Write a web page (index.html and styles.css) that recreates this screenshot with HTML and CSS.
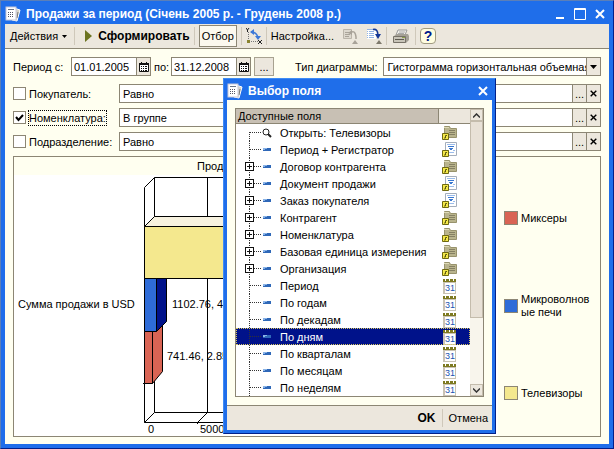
FILE: index.html
```
<!DOCTYPE html>
<html lang="ru">
<head>
  <meta charset="UTF-8" />
  <meta name="viewport" content="width=device-width, initial-scale=1.0"/>
  <title>Продажи за период</title>
  <link rel="stylesheet" href="styles.css">
</head>
<body>
  <!-- Shared icons -->
  <svg class="sprite" aria-hidden="true">
    <symbol id="report" viewBox="0 0 16 16">
      <path d="M9 2l6 2-3 11-5-1z" fill="#d8d4c8" stroke="#fff"/>
      <path d="M13 6l-1 6" stroke="#777"/>
      <rect x="1" y="1" width="10" height="13" fill="#fff" stroke="#c8c8d8"/>
      <path d="M3 3.500h6" stroke="#6a7488"/>
      <path d="M3 6.500h1m1 0h1m1 0h1M3 8.500h1m1 0h1m1 0h1M3 10.500h1m1 0h1m1 0h1" stroke="#556"/>
    </symbol>
    <symbol id="close" viewBox="0 0 10 10">
      <path d="M1 1l8 8M9 1l-8 8" stroke="currentColor" stroke-width="2"/>
    </symbol>
    <symbol id="calendar" viewBox="0 0 10 10">
      <path d="M.5 1.500h9v8h-9z" fill="#fff" stroke="#111"/>
      <path d="M0 1h10v2H0zM2 0h1v1H2zm5 0h1v1H7z" fill="#111"/>
      <path d="M2 4h1v1H2zm2 0h1v1H4zm2 0h2v1H6zM2 6h1v1H2zm2 0h1v1H4zm2 0h2v1H6zM2 8h1v1H2zm2 0h1v1H4zm2 0h2v1H6z" fill="#111"/>
    </symbol>
    <symbol id="arrow" viewBox="0 0 7 4"><path d="M0 0h7L3.500 4z" fill="currentColor"/></symbol>
    <symbol id="branch-first" viewBox="0 0 18 17">
      <path d="M5.500 8v9M6 8.500h11" fill="none" stroke="#333" stroke-dasharray="1 1"/>
    </symbol>
    <symbol id="branch" viewBox="0 0 18 17">
      <path d="M5.500 0v17M6 8.500h11" fill="none" stroke="#333" stroke-dasharray="1 1"/>
    </symbol>
    <symbol id="branch-plus" viewBox="0 0 18 17">
      <path d="M5.500 0v17M10 8.500h7" fill="none" stroke="#333" stroke-dasharray="1 1"/>
      <rect x="1.500" y="4.500" width="8" height="8" fill="#fff" stroke="#111"/>
      <path d="M3 8.500h5M5.500 6v5" stroke="#111"/>
    </symbol>
    <symbol id="item" viewBox="0 0 10 10">
      <path d="M1 3h8v3H1z" fill="#2f68b8"/>
      <path d="M1 3h4v1H3v1H1z" fill="#8ab4e8"/>
    </symbol>
    <symbol id="lens" viewBox="0 0 10 10">
      <circle cx="4" cy="4" r="3" fill="#fff" stroke="#222"/>
      <path d="M6 6l3 3" stroke="#222" stroke-width="2"/>
    </symbol>
    <symbol id="link" viewBox="0 0 7 7">
      <path d="M.5.5h6v6h-6z" fill="#f4e94a" stroke="#6f6910"/>
      <path d="M2 5h1.500V2.500H5" fill="none" stroke="#5d5810"/>
    </symbol>
    <symbol id="folder" viewBox="0 0 16 16">
      <path d="M2.500 1.500h5l1 2h6v9h-12z" fill="#b9b48d" stroke="#98936d"/>
      <path d="M7 5.500h6M7 7.500h6M7 9.500h6" stroke="#858063"/>
      <path d="M2 2.500h5" stroke="#dedab8"/>
      <use href="#link" x="0" y="8" width="7" height="7"/>
    </symbol>
    <symbol id="doc" viewBox="0 0 16 16">
      <path d="M3.500.5h11v13h-11z" fill="#fff" stroke="#a4aebc"/>
      <path d="M5 2.500h8M5 8.500h2m4 0h2M7 10.500h5" stroke="#9abcec"/>
      <path d="M6 4.500h6M7 6.500h4M8 7.500h2" stroke="#3a78d0"/>
      <use href="#link" x="0" y="8" width="7" height="7"/>
    </symbol>
    <symbol id="day" viewBox="0 0 16 16">
      <path d="M1 1h13v15H1z" fill="#c9c3b4"/>
      <path d="M1 1h13v3H1z" fill="#7e7a22"/>
      <path d="M3 1h1v2H3zm4 0h1v2H7zm4 0h1v2h-1z" fill="#fff"/>
      <path d="M3 5h10v10H3z" fill="#fff"/>
      <text x="8" y="13" class="day-text">31</text>
    </symbol>
  </svg>

  <main class="window">
    <header class="titlebar">
      <svg class="icon"><use href="#report"/></svg>
      <h1>Продажи за период (Січень 2005 р. - Грудень 2008 р.)</h1>
      <div class="window-buttons">
        <button aria-label="Свернуть"><svg width="10" height="12" viewBox="0 0 10 12"><path d="M1 10h8" stroke="#fff" stroke-width="2"/></svg></button>
        <button aria-label="Развернуть"><svg width="12" height="12" viewBox="0 0 12 12"><path d="M.5.5h11v11H.5z" fill="none" stroke="#fff"/><path d="M0 1.500h12" stroke="#fff"/></svg></button>
        <button aria-label="Закрыть"><svg width="10" height="10"><use href="#close"/></svg></button>
      </div>
    </header>

    <nav class="toolbar">
      <button class="actions">Действия <svg width="5" height="3"><use href="#arrow"/></svg></button>
      <span class="sep"></span>
      <button class="run"><svg width="7" height="12" viewBox="0 0 7 12"><path d="M0 0l7 6-7 6z" fill="#6c7420"/></svg> Сформировать</button>
      <span class="sep"></span>
      <button class="pressed">Отбор</button>
      <span class="sep"></span>
      <button aria-label="Поменять оси">
        <svg class="icon" viewBox="0 0 16 16">
          <path d="M2.500 4v10M3 13.500h11" stroke="#777" stroke-dasharray="1 1" fill="none"/>
          <path d="M0 0l1.500 2L3 0M1.500 2v2M12 12l4 4M16 12l-4 4" stroke="#222" fill="none"/>
          <path d="M5 4q6 0 7 6" fill="none" stroke="#3b78d8" stroke-width="1.500"/>
          <path d="M4 4l4-3v6zM12 12l-3-4h6z" fill="#3b78d8"/>
          <path d="M1 12h3v3H1z" fill="#8a8430"/>
        </svg>
      </button>
      <span class="sep"></span>
      <button>Настройка...</button>
      <button class="spaced" aria-label="Восстановить настройки" disabled>
        <svg class="icon" viewBox="0 0 16 16">
          <path d="M1.500 1.500h8v9h-8z" fill="#ddd8ce" stroke="#bbb5aa"/>
          <path d="M3 4.500h5M3 6.500h5M3 8.500h4" stroke="#aaa49a"/>
          <path d="M8 5q5-4 6 4v2" fill="none" stroke="#a8a298" stroke-width="1.500"/>
          <path d="M6 5l4-3v5z" fill="#a8a298"/>
          <path d="M10 16l3-4 3 4z" fill="#a8a298"/>
        </svg>
      </button>
      <button class="spaced" aria-label="Сохранить настройки">
        <svg class="icon" viewBox="0 0 16 16">
          <path d="M1 1h9v10H1z" fill="#fff"/>
          <path d="M1 1.500h7M1 3.500h1m1 0h5M1 5.500h1m1 0h5M1 7.500h1m1 0h5M1 9.500h1m1 0h5" stroke="#94b4e4"/>
          <path d="M7 1.500q5-1 5 6" fill="none" stroke="#143898" stroke-width="1.500"/>
          <path d="M9 6h6l-3 5z" fill="#143898"/>
          <path d="M10 16l3-4 3 4z" fill="#7e796c"/>
        </svg>
      </button>
      <span class="sep"></span>
      <button class="print" aria-label="Печать">
        <svg class="icon" viewBox="0 0 16 16">
          <path d="M5 2h9l-2 5H3z" fill="#f4f2ec" stroke="#999"/>
          <path d="M6 4h6M5 5.500h6" stroke="#aaa"/>
          <path d="M1 8l3-2h11l1 2v4l-3 3H1z" fill="#a5a197"/>
          <path d="M.5 8.500h12v6H.5z" fill="#c8c4b8" stroke="#777268"/>
          <path d="M2 11.500h9" stroke="#5e5a50"/>
          <path d="M9 9h3v1H9z" fill="#8aa048"/>
        </svg>
      </button>
      <span class="sep"></span>
      <button class="help" aria-label="Справка">?</button>
    </nav>

    <div class="content">
      <div class="period">
        <label for="from">Период с:</label>
        <div class="field date">
          <input id="from" type="text" value="01.01.2005">
          <button aria-label="Календарь"><svg width="10" height="10"><use href="#calendar"/></svg></button>
        </div>
        <label for="to">по:</label>
        <div class="field date">
          <input id="to" type="text" value="31.12.2008">
          <button aria-label="Календарь"><svg width="10" height="10"><use href="#calendar"/></svg></button>
        </div>
        <button class="more">...</button>
        <label class="type-label" for="type">Тип диаграммы:</label>
        <div class="field combo">
          <select id="type"><option>Гистограмма горизонтальная объемная</option></select>
          <span class="combo-arrow"><svg width="7" height="4"><use href="#arrow"/></svg></span>
        </div>
      </div>

      <div class="filter">
        <span class="check"><input type="checkbox" id="buyer"><svg viewBox="0 0 13 13"><path d="M3 6l2.500 3L10 4" /></svg></span>
        <label for="buyer"><span>Покупатель:</span></label>
        <div class="field">
          <input type="text" value="Равно" aria-label="Условие: покупатель">
          <button>...</button>
          <button aria-label="Очистить"><svg width="7" height="7" viewBox="0 0 10 10"><use href="#close"/></svg></button>
        </div>
      </div>
      <div class="filter">
        <span class="check"><input type="checkbox" id="goods" checked><svg viewBox="0 0 13 13"><path d="M3 6l2.500 3L10 4" /></svg></span>
        <label for="goods"><span class="focused">Номенклатура:</span></label>
        <div class="field">
          <input type="text" value="В группе" aria-label="Условие: номенклатура">
          <button>...</button>
          <button aria-label="Очистить"><svg width="7" height="7" viewBox="0 0 10 10"><use href="#close"/></svg></button>
        </div>
      </div>
      <div class="filter">
        <span class="check"><input type="checkbox" id="unit"><svg viewBox="0 0 13 13"><path d="M3 6l2.500 3L10 4" /></svg></span>
        <label for="unit"><span>Подразделение:</span></label>
        <div class="field">
          <input type="text" value="Равно" aria-label="Условие: подразделение">
          <button>...</button>
          <button aria-label="Очистить"><svg width="7" height="7" viewBox="0 0 10 10"><use href="#close"/></svg></button>
        </div>
      </div>

      <section class="chart">
        <h2>Продажи за период</h2>
        <div class="plot">
          <svg width="480" height="260" viewBox="0 0 480 260">
            <!-- back wall and floor -->
            <g fill="none" stroke="#000">
              <path d="M130.500 12.500V247.500H480M130.500 12.500l10-10H480M140.500 2.500V237.500H480M193.500 2.500V237.500M130.500 247.500l10-10M183.500 247.500l10-10"/>
              <path d="M129 208.500h2M183.500 247v2"/>
            </g>
            <path d="M130.500 51.500l10-10H480v10z" fill="#f7f2df" stroke="#000"/>
            <path d="M130.500 51.500H480v52H130.500z" fill="#f4e88e" stroke="#000"/>
            <path d="M138.500 156.500l10-9v49l-10 12z" fill="#d96454" stroke="#000"/>
            <path d="M130.500 156.500h8v52h-8z" fill="#d96454" stroke="#000"/>
            <path d="M142.500 103.500h10v43l-10 10z" fill="#00128a" stroke="#000"/>
            <path d="M130.500 103.500h12v53h-12z" fill="#2e6cd8" stroke="#000"/>
            <text x="4" y="133">Сумма продажи в USD</text>
            <text x="158" y="133">1102.76, 4.24%</text>
            <text x="153" y="185">741.46, 2.85%</text>
            <text x="134" y="258">0</text>
            <text x="186" y="258">5000</text>
          </svg>
        </div>
        <ul class="legend">
          <li><i class="swatch red"></i><span>Миксеры</span></li>
          <li><i class="swatch blue"></i><span>Микроволновые печи</span></li>
          <li><i class="swatch yellow"></i><span>Телевизоры</span></li>
        </ul>
      </section>
    </div>
  </main>

  <!-- Field picker -->
  <div class="dialog" role="dialog" aria-labelledby="dialogTitle">
    <header class="titlebar">
      <svg class="icon"><use href="#report"/></svg>
      <h2 id="dialogTitle">Выбор поля</h2>
      <div class="window-buttons">
        <button aria-label="Закрыть"><svg width="10" height="10"><use href="#close"/></svg></button>
      </div>
    </header>
    <div class="list">
      <table>
        <thead>
          <tr><th>Доступные поля</th><th class="kind"></th></tr>
        </thead>
        <tbody>
          <tr><td><svg class="tree"><use href="#branch-first"/></svg><svg class="mark"><use href="#lens"/></svg>Открыть: Телевизоры</td><td><svg class="icon"><use href="#folder"/></svg></td></tr>
          <tr><td><svg class="tree"><use href="#branch"/></svg><svg class="mark"><use href="#item"/></svg>Период + Регистратор</td><td><svg class="icon"><use href="#doc"/></svg></td></tr>
          <tr><td><svg class="tree"><use href="#branch-plus"/></svg><svg class="mark"><use href="#item"/></svg>Договор контрагента</td><td><svg class="icon"><use href="#folder"/></svg></td></tr>
          <tr><td><svg class="tree"><use href="#branch-plus"/></svg><svg class="mark"><use href="#item"/></svg>Документ продажи</td><td><svg class="icon"><use href="#doc"/></svg></td></tr>
          <tr><td><svg class="tree"><use href="#branch-plus"/></svg><svg class="mark"><use href="#item"/></svg>Заказ покупателя</td><td><svg class="icon"><use href="#doc"/></svg></td></tr>
          <tr><td><svg class="tree"><use href="#branch-plus"/></svg><svg class="mark"><use href="#item"/></svg>Контрагент</td><td><svg class="icon"><use href="#folder"/></svg></td></tr>
          <tr><td><svg class="tree"><use href="#branch-plus"/></svg><svg class="mark"><use href="#item"/></svg>Номенклатура</td><td><svg class="icon"><use href="#folder"/></svg></td></tr>
          <tr><td><svg class="tree"><use href="#branch-plus"/></svg><svg class="mark"><use href="#item"/></svg>Базовая единица измерения</td><td><svg class="icon"><use href="#folder"/></svg></td></tr>
          <tr><td><svg class="tree"><use href="#branch-plus"/></svg><svg class="mark"><use href="#item"/></svg>Организация</td><td><svg class="icon"><use href="#folder"/></svg></td></tr>
          <tr><td><svg class="tree"><use href="#branch"/></svg><svg class="mark"><use href="#item"/></svg>Период</td><td><svg class="icon"><use href="#day"/></svg></td></tr>
          <tr><td><svg class="tree"><use href="#branch"/></svg><svg class="mark"><use href="#item"/></svg>По годам</td><td><svg class="icon"><use href="#day"/></svg></td></tr>
          <tr><td><svg class="tree"><use href="#branch"/></svg><svg class="mark"><use href="#item"/></svg>По декадам</td><td><svg class="icon"><use href="#day"/></svg></td></tr>
          <tr class="selected"><td><svg class="tree"><use href="#branch"/></svg><svg class="mark"><use href="#item"/></svg>По дням</td><td><svg class="icon"><use href="#day"/></svg></td></tr>
          <tr><td><svg class="tree"><use href="#branch"/></svg><svg class="mark"><use href="#item"/></svg>По кварталам</td><td><svg class="icon"><use href="#day"/></svg></td></tr>
          <tr><td><svg class="tree"><use href="#branch"/></svg><svg class="mark"><use href="#item"/></svg>По месяцам</td><td><svg class="icon"><use href="#day"/></svg></td></tr>
          <tr><td><svg class="tree"><use href="#branch"/></svg><svg class="mark"><use href="#item"/></svg>По неделям</td><td><svg class="icon"><use href="#day"/></svg></td></tr>
        </tbody>
      </table>
      <div class="scrollbar">
        <button aria-label="Вверх"><svg width="7" height="5" viewBox="0 0 7 5"><path d="M0 4.500l3.500-3.500L7 4.500" fill="none" stroke="#333" stroke-width="1.500"/></svg></button>
        <div class="track"><div class="thumb"></div></div>
        <button aria-label="Вниз"><svg width="7" height="5" viewBox="0 0 7 5"><path d="M0 .5L3.500 4 7 .5" fill="none" stroke="#333" stroke-width="1.500"/></svg></button>
      </div>
    </div>
    <footer class="dialog-footer">
      <button class="ok">OK</button>
      <span class="sep"></span>
      <button>Отмена</button>
    </footer>
  </div>
</body>
</html>
```
FILE: styles.css
```
* {
  margin: 0;
  padding: 0;
  box-sizing: border-box;
}
body {
  font: 11px/14px "Liberation Sans", Arial, sans-serif;
  color: #000;
  background: #6f7f9c;
}
button, input, select {
  font: inherit;
  color: inherit;
  background: none;
  border: none;
  border-radius: 0;
  outline: none;
}
svg {
  display: block;
  flex: none;
}
.sprite {
  position: absolute;
  width: 0;
  height: 0;
}
.icon {
  width: 16px;
  height: 16px;
}

/* Window frame */
.window {
  display: flex;
  flex-direction: column;
  min-height: 100vh;
  padding: 0 4px 4px;
  background: #1f6eea;
  border: 1px solid #5b7fb8;
  border-right-color: #00208a;
  border-bottom-color: #00208a;
}
.titlebar {
  display: flex;
  align-items: center;
  gap: 5px;
  height: 23px;
  color: #fff;
}
.window .titlebar {
  padding: 2px 4px 0 0;
}
.titlebar h1, .titlebar h2 {
  flex: 1;
  font-size: 12px;
  font-weight: bold;
  white-space: nowrap;
}
.window-buttons {
  display: flex;
  align-items: center;
  gap: 9px;
}
.window-buttons button {
  color: #fff;
}

/* Toolbar */
.toolbar {
  display: flex;
  align-items: center;
  gap: 4px;
  height: 25px;
  padding: 0 5px;
  background: #ece7dd;
  border-bottom: 1px solid #8c8674;
}
.toolbar button {
  display: flex;
  align-items: center;
  gap: 4px;
  white-space: nowrap;
}
.toolbar .actions {
  padding-right: 3px;
}
.sep {
  width: 1px;
  height: 18px;
  background: #cfc8ba;
}
.toolbar .run {
  gap: 6px;
  padding-left: 6px;
  font-size: 12px;
  font-weight: bold;
}
.toolbar .pressed {
  height: 22px;
  padding: 0 2px;
  background: #fbf8ee;
  border: 1px solid #8c8674;
}
.toolbar .spaced {
  margin-left: 4px;
}
.toolbar .print {
  padding: 0 2px;
}
.toolbar .help {
  justify-content: center;
  width: 16px;
  height: 16px;
  background: #fffde0;
  border: 1px solid #a09a80;
  border-radius: 4px;
  color: #001a8c;
  font-size: 14px;
  font-weight: bold;
}

/* Form */
.content {
  display: flex;
  flex: 1;
  flex-direction: column;
  gap: 5px;
  padding: 8px 8px 7px;
  background: #fffff0;
}
.period {
  display: flex;
  align-items: center;
  gap: 3px;
  margin-bottom: 3px;
  white-space: nowrap;
}
.period label:first-child {
  width: 55px;
}
.period .field + label {
  width: 14px;
}
.field {
  display: flex;
  height: 19px;
  background: #fff;
  border: 1px solid #8c8674;
}
.field input {
  flex: 1;
  min-width: 0;
  padding: 0 3px;
}
.field button, .combo-arrow, .more {
  display: flex;
  align-items: center;
  justify-content: center;
  width: 14px;
  background: #ece7dd;
  border-left: 1px solid #8c8674;
}
.field.date {
  width: 80px;
}
.field.date input {
  padding: 0 2px;
}
.more {
  width: 20px;
  height: 19px;
  border: 1px solid #a8a290;
}
.period .type-label {
  margin-left: auto;
  padding-right: 3px;
}
.combo {
  display: grid;
  grid-template-columns: 1fr 14px;
  width: 37%;
}
.combo select {
  grid-area: 1 / 1 / 2 / 3;
  min-width: 0;
  padding: 0 14px 0 3px;
  appearance: none;
}
.combo-arrow {
  grid-area: 1 / 2;
  pointer-events: none;
}
.filter {
  display: flex;
  align-items: center;
  gap: 3px;
}
.filter label {
  width: 87px;
  white-space: nowrap;
}
.filter .field {
  flex: 1;
}
.filter .focused {
  padding: 1px 0;
  outline: 1px dotted #000;
}
.check {
  display: grid;
}
.check input {
  grid-area: 1 / 1;
  width: 13px;
  height: 13px;
  background: #fff;
  border: 1px solid #8c8674;
  appearance: none;
}
.check svg {
  grid-area: 1 / 1;
  width: 13px;
  height: 13px;
  pointer-events: none;
  visibility: hidden;
}
.check input:checked + svg {
  visibility: visible;
}
.check path {
  fill: none;
  stroke: #000;
  stroke-width: 2;
}

/* Chart */
.chart {
  display: grid;
  flex: 1;
  grid-template-columns: 1fr 102px;
  grid-template-rows: 18px 1fr;
  border: 1px solid #8c8674;
}
.chart h2 {
  grid-column: 1 / 3;
  padding: 2px 0 0 183px;
  font-size: 11px;
  font-weight: normal;
}
.plot {
  min-width: 0;
  overflow: hidden;
  background: #fff;
}
.plot text {
  font-size: 11px;
}
.legend {
  display: flex;
  flex-direction: column;
  justify-content: space-between;
  padding: 36px 8px 36px 6px;
  list-style: none;
}
.legend li {
  display: flex;
  align-items: center;
  gap: 3px;
}
.legend span {
  flex: 1;
  line-height: 13px;
  word-break: break-all;
}
.swatch {
  width: 14px;
  height: 14px;
  border: 1px solid #8c8674;
}
.red {
  background: #d96454;
}
.blue {
  background: #2e6cd8;
}
.yellow {
  background: #f4e88e;
}

/* Dialog */
.dialog {
  position: absolute;
  top: 78px;
  left: 223px;
  width: 273px;
  padding: 0 3px 3px;
  background: #1f6eea;
  border: 1px solid #3f8cf4;
  border-right-color: #00208a;
  border-bottom-color: #00208a;
}
.dialog .titlebar {
  height: 21px;
  padding: 2px 4px 0 0;
}
.list {
  display: flex;
  background: #fff;
  border: 1px solid #8c8674;
  outline: 8px solid #fffff0;
  margin: 8px;
}
.list table {
  flex: 1;
  border-collapse: collapse;
  table-layout: fixed;
}
.list th {
  height: 14px;
  padding: 0 2px;
  background: #c8c0b4;
  border-bottom: 1px solid #8c8674;
  font-weight: normal;
  text-align: left;
}
.list .kind {
  width: 32px;
  background: #ece7dd;
  border-left: 1px solid #8c8674;
}
.list td {
  height: 17px;
  white-space: nowrap;
}
.list td:first-child {
  display: flex;
  align-items: center;
  padding-left: 8px;
}
.list td:last-child {
  padding-left: 4px;
}
.tree {
  width: 18px;
  height: 17px;
}
.mark {
  width: 10px;
  height: 10px;
  margin-right: 8px;
}
.selected {
  background: #00128a;
  color: #fff;
  outline: 1px dotted #d8c860;
  outline-offset: -1px;
}
.day-text {
  fill: #1a52b0;
  font-size: 9px;
  text-anchor: middle;
}
.scrollbar {
  display: flex;
  flex-direction: column;
  width: 13px;
  background: #f8f5ec;
}
.scrollbar button {
  display: flex;
  align-items: center;
  justify-content: center;
  height: 12px;
  background: #ece7dd;
  border: 1px solid #c4bcac;
}
.track {
  flex: 1;
}
.thumb {
  height: 75%;
  background: #e8e1d6;
  border: 1px solid #c4bcac;
}
.dialog-footer {
  display: flex;
  align-items: center;
  justify-content: flex-end;
  gap: 6px;
  height: 25px;
  padding: 0 4px;
  background: #ece7dd;
  border-top: 1px solid #8c8674;
}
.ok {
  font-size: 12px;
  font-weight: bold;
}
```
